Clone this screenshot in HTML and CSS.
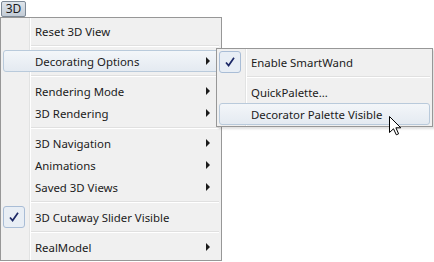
FILE: index.html
```html
<!DOCTYPE html>
<html lang="en">
<head>
    <meta charset="UTF-8">
    <title>3D Menu</title>
    <link rel="stylesheet" href="styles.css">
</head>
<body>
    <div class="app">
        <div class="tab">3D</div>

        <div class="menu main">
            <div class="item"><span class="gutter"></span><span class="label">Reset 3D View</span></div>
            <div class="sep"></div>
            <div class="item hot"><span class="gutter"></span><span class="label">Decorating Options</span><span class="arrow"></span></div>
            <div class="sep"></div>
            <div class="item"><span class="gutter"></span><span class="label">Rendering Mode</span><span class="arrow"></span></div>
            <div class="item"><span class="gutter"></span><span class="label">3D Rendering</span><span class="arrow"></span></div>
            <div class="sep"></div>
            <div class="item"><span class="gutter"></span><span class="label">3D Navigation</span><span class="arrow"></span></div>
            <div class="item"><span class="gutter"></span><span class="label">Animations</span><span class="arrow"></span></div>
            <div class="item"><span class="gutter"></span><span class="label">Saved 3D Views</span><span class="arrow"></span></div>
            <div class="sep"></div>
            <div class="item">
                <span class="gutter"><span class="check"><svg width="12" height="12" viewBox="0 0 12 12"><path d="M2 6.5 L4.6 9.6 L10 1.8" fill="none" stroke="#1c2866" stroke-width="1.7"/></svg></span></span>
                <span class="label">3D Cutaway Slider Visible</span>
            </div>
            <div class="sep"></div>
            <div class="item"><span class="gutter"></span><span class="label">RealModel</span><span class="arrow"></span></div>
        </div>

        <div class="menu sub">
            <div class="item">
                <span class="gutter"><span class="check"><svg width="12" height="12" viewBox="0 0 12 12"><path d="M2 6.5 L4.6 9.6 L10 1.8" fill="none" stroke="#1c2866" stroke-width="1.7"/></svg></span></span>
                <span class="label">Enable SmartWand</span>
            </div>
            <div class="sep"></div>
            <div class="item"><span class="gutter"></span><span class="label">QuickPalette...</span></div>
            <div class="item hot"><span class="gutter"></span><span class="label">Decorator Palette Visible</span></div>
        </div>

        <svg class="cursor" width="13" height="20" viewBox="0 0 13 20">
            <path d="M0.5 0.5 L0.5 16.5 L4.5 12.8 L7.3 18.8 L9.6 17.8 L6.9 11.8 L11.8 11.8 Z" fill="#fff" stroke="#000" stroke-width="1"/>
        </svg>
    </div>
</body>
</html>
```

FILE: styles.css
```css
body {
    margin: 0;
    background: #fff;
    font-family: "Noto Sans", "Open Sans", sans-serif;
    font-size: 11.4px;
    color: #1b1b1b;
}
.app {
    position: relative;
    width: 434px;
    height: 262px;
    overflow: hidden;
}
.tab {
    margin: 1px 0 0 1px;
    width: 23px;
    height: 14px;
    line-height: 14px;
    text-align: center;
    border: 1px solid #7d8996;
    border-radius: 2px;
    background: linear-gradient(#dfe5eb, #c3ccd6);
    font-size: 12px;
}
.menu {
    background-color: #f0f0f0;
    border: 1px solid #979797;
    padding: 2px;
    box-sizing: border-box;
    /* gutter line: grey then white */
    background-image: linear-gradient(to right, transparent 28px, #e2e3e3 28px, #e2e3e3 29px, #fff 29px, #fff 30px, transparent 30px);
}
.main {
    width: 222px;
    height: 244px;
}
.sub {
    position: absolute;
    left: 216px;
    top: 48px;
    width: 217px;
    padding-bottom: 1px;
    box-shadow: 2px 2px 2px rgba(0, 0, 0, 0.12);
}
.item {
    position: relative;
    display: flex;
    align-items: center;
    height: 22px;
    box-sizing: border-box;
    border: 1px solid transparent;
    border-radius: 3px;
}
.item.hot {
    border-color: #b9cadb;
    background: linear-gradient(#f3f6f9, #e4eaf1);
}
.gutter {
    width: 31px;
    flex: none;
    display: flex;
    align-items: center;
}
.label {
    flex: 1;
}
.check {
    width: 20px;
    height: 20px;
    margin-left: -1px;
    border: 1px solid #a9bdd6;
    border-radius: 3px;
    background: #e8eef5;
    display: flex;
    align-items: center;
    justify-content: center;
}
.arrow {
    width: 0;
    height: 0;
    margin-right: 8px;
    border-top: 4px solid transparent;
    border-bottom: 4px solid transparent;
    border-left: 4px solid #1b1b1b;
}
.sep {
    height: 8px;
    margin-left: 28px;
    background: linear-gradient(#f0f0f0 3px, #e0e0e0 3px, #e0e0e0 4px, #fff 4px, #fff 5px, #f0f0f0 5px);
}
.cursor {
    position: absolute;
    left: 389px;
    top: 116px;
}
```
